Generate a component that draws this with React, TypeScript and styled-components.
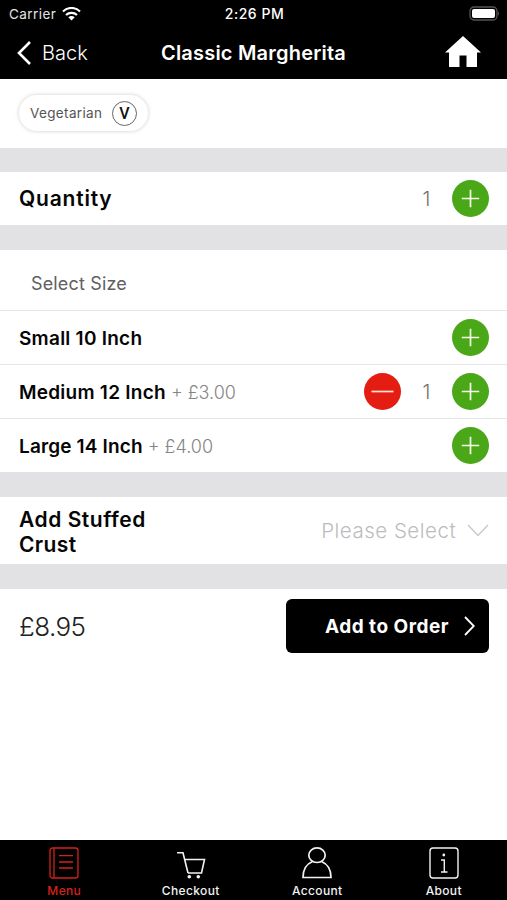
import React from "react";
import styled, { createGlobalStyle } from "styled-components";

const GlobalStyle = createGlobalStyle`
  * { box-sizing: border-box; }
  html, body { margin: 0; padding: 0; background: #fff; }
  body { font-family: Inter, "Liberation Sans", sans-serif; color: #050505; }
  button { font: inherit; border: 0; padding: 0; margin: 0; background: none; color: inherit; }
  svg { display: block; flex: none; }
`;

const Screen = styled.div`
  width: 507px;
  height: 900px;
  display: flex;
  flex-direction: column;
  overflow: hidden;
  background: #fff;
`;

const Header = styled.header`
  height: 79px;
  flex: none;
  background: #000;
  color: #fff;
`;

const StatusBar = styled.div`
  height: 27px;
  display: grid;
  grid-template-columns: 1fr auto 1fr;
  align-items: center;
  padding: 0 7px 0 9px;
`;

const Carrier = styled.div`
  display: flex;
  align-items: center;
  gap: 6px;
  color: #e4e4e4;
`;

const NavBar = styled.nav`
  height: 52px;
  display: grid;
  grid-template-columns: 1fr auto 1fr;
  align-items: center;
  padding: 0 17px;
`;

const BackButton = styled.button`
  display: flex;
  align-items: center;
  gap: 10px;
`;

const End = styled.div`
  display: flex;
  justify-content: flex-end;
`;

const HomeButton = styled.button`
  justify-self: end;
  padding: 0 9px 3px 0;
`;

const Label = styled.span<{ $size: number; $weight?: number; $track?: number; $color?: string }>`
  font-size: ${(p) => p.$size}px;
  font-weight: ${(p) => p.$weight ?? 400};
  letter-spacing: ${(p) => p.$track ?? 0}px;
  color: ${(p) => p.$color ?? "inherit"};
  white-space: nowrap;
`;

const Content = styled.main`
  flex: 1;
  min-height: 0;
`;

const TagArea = styled.section`
  height: 69px;
  padding: 16px 19px;
`;

const Tag = styled.div`
  width: 129px;
  height: 36px;
  border-radius: 18px;
  display: flex;
  align-items: center;
  justify-content: space-between;
  padding: 0 11px;
  box-shadow: 0 0 4px rgba(0, 0, 0, 0.2);
`;

const VegMark = styled.span`
  width: 25px;
  height: 25px;
  border: 1px solid #666;
  border-radius: 50%;
  display: flex;
  align-items: center;
  justify-content: center;
  font: 500 16px Roboto, sans-serif;
  color: #111;
`;

const Divider = styled.div<{ $height: number }>`
  height: ${(p) => p.$height}px;
  background: #e2e2e4;
`;

const Row = styled.div<{ $height: number; $line?: boolean }>`
  height: ${(p) => p.$height}px;
  display: flex;
  align-items: center;
  justify-content: space-between;
  padding: 0 18px 0 19px;
  border-top: ${(p) => (p.$line ? "1px solid #e6e6e8" : "0")};
`;

const GroupTitle = styled.div`
  height: 60px;
  display: flex;
  align-items: center;
  padding: 7px 31px 0;
`;

const Name = styled.div`
  display: flex;
  align-items: baseline;
  gap: 5px;
  padding-top: 2px;
`;

const Stepper = styled.div`
  display: grid;
  grid-template-columns: 37px 51px 37px;
  align-items: center;
`;

const Count = styled.span`
  grid-column: 2;
  text-align: center;
  font: 300 20px Inter, sans-serif;
  color: #707070;
`;

const RoundButton = styled.button<{ $kind: "add" | "remove" }>`
  grid-column: ${(p) => (p.$kind === "add" ? 3 : 1)};
  grid-row: 1;
  width: 37px;
  height: 37px;
  border-radius: 50%;
  background: ${(p) => (p.$kind === "add" ? "#4aa718" : "#e51c12")};
`;

const OptionName = styled.div`
  padding-top: 2px;
  line-height: 25px;
  display: flex;
  flex-direction: column;
`;

const SelectBox = styled.button`
  display: flex;
  align-items: center;
  gap: 11px;
`;

const OrderArea = styled.section`
  display: flex;
  justify-content: space-between;
  align-items: center;
  padding: 10px 18px 0 19px;
`;

const OrderButton = styled.button`
  width: 203px;
  height: 54px;
  border-radius: 6px;
  background: #000;
  color: #fff;
  display: flex;
  align-items: center;
  justify-content: flex-end;
  gap: 15px;
  padding-right: 14px;
`;

const TabBar = styled.footer`
  height: 60px;
  flex: none;
  background: #000;
  display: grid;
  grid-template-columns: repeat(4, 1fr);
  padding-left: 1px;
`;

const Tab = styled.button<{ $active?: boolean }>`
  display: flex;
  flex-direction: column;
  align-items: center;
  padding-top: 7px;
  gap: 4px;
  color: ${(p) => (p.$active ? "#d3211b" : "#f2f2f2")};
`;

const Plus = () => (
  <svg width="37" height="37" viewBox="0 0 37 37" stroke="#f4fbe9" strokeWidth="1.7">
    <path d="M9.8 18.5h17.4M18.5 9.8v17.4" />
  </svg>
);

const Minus = () => (
  <svg width="37" height="37" viewBox="0 0 37 37" stroke="#ffe3d6" strokeWidth="1.7">
    <path d="M7.500 18.500h22" />
  </svg>
);

function Quantity({ count, removable }: { count?: number; removable?: boolean }) {
  return (
    <Stepper>
      {removable && <RoundButton $kind="remove" aria-label="Remove"><Minus /></RoundButton>}
      {count !== undefined && <Count>{count}</Count>}
      <RoundButton $kind="add" aria-label="Add"><Plus /></RoundButton>
    </Stepper>
  );
}

const sizes = [
  { name: "Small 10 Inch", track: 0.25 },
  { name: "Medium 12 Inch", track: 0.25, price: "+ £3.00", count: 1 },
  { name: "Large 14 Inch", track: 0.15, price: "+ £4.00" },
];

const line = { fill: "none", stroke: "currentColor" };

const tabs = [
  {
    name: "Menu",
    icon: (
      <svg width="30" height="32" viewBox="0 0 30 32" {...line} strokeWidth="1.3">
        <rect x="1" y="1" width="28" height="30" rx="2.5" />
        <path d="M5 1v30M10 8.600h14M10 15h14M10 21h14" />
      </svg>
    ),
  },
  {
    name: "Checkout",
    icon: (
      <svg width="30" height="32" viewBox="0 0 30 32" {...line} strokeWidth="1.600">
        <path d="M1 5.700h6L12 26M8.700 12.500H28.500L25.500 26H12" />
        <circle cx="13.300" cy="29.700" r="1.800" fill="currentColor" stroke="none" />
        <circle cx="22.300" cy="29.700" r="1.800" fill="currentColor" stroke="none" />
      </svg>
    ),
  },
  {
    name: "Account",
    icon: (
      <svg width="30" height="32" viewBox="0 0 30 32" {...line} strokeWidth="1.700">
        <ellipse cx="15" cy="8.200" rx="8.200" ry="7.300" />
        <path d="M10.500 14.500C4.500 17 1 21.500 1 30.500h28c0-9-3.500-13.500-9.500-16" />
      </svg>
    ),
  },
  {
    name: "About",
    icon: (
      <svg width="30" height="32" viewBox="0 0 30 32" {...line} strokeWidth="1.400">
        <rect x="1" y="1" width="28" height="30" rx="3" />
        <path d="M12 13h3.300v12M12 25h6.500" />
        <circle cx="14.800" cy="8" r="1.400" fill="currentColor" stroke="none" />
      </svg>
    ),
  },
];

export default function App() {
  return (
    <Screen>
      <GlobalStyle />
      <Header>
        <StatusBar>
          <Carrier>
            <Label $size={13.5} $track={0.45}>Carrier</Label>
            <svg width="19" height="14" viewBox="0 0 19 14" fill="none" stroke="#fff" strokeWidth="2.200">
              <path d="M1 4.500C5.800-.2 13.200-.2 18 4.500M4 8c3.100-2.900 7.900-2.900 11 0" />
              <path d="M6.300 10.300c1.800-1.600 4.600-1.600 6.400 0l-3.200 3.200z" fill="#fff" stroke="none" />
            </svg>
          </Carrier>
          <Label $size={14} $weight={500} $track={0.5}>2:26 PM</Label>
          <End>
            <svg width="31" height="15" viewBox="0 0 31 15">
              <rect x="1" y="1" width="27" height="13" rx="4" fill="none" stroke="#555" strokeWidth="1.300" />
              <rect x="3" y="3" width="23" height="9" rx="2" fill="#fff" />
              <path d="M29 5.200q2 2.300 0 4.600z" fill="#555" />
            </svg>
          </End>
        </StatusBar>
        <NavBar>
          <BackButton>
            <svg width="15" height="24" viewBox="0 0 15 24" fill="none" stroke="#fff" strokeWidth="2.600">
              <path d="M13 1 2 12 13 23" />
            </svg>
            <Label $size={20} $weight={300}>Back</Label>
          </BackButton>
          <Label $size={20} $weight={600} $track={0.2}>Classic Margherita</Label>
          <HomeButton aria-label="Home">
            <svg width="36" height="31" viewBox="0 0 36 31" fill="#fff">
              <path d="M18 0 36 16.500h-4V31H21.500V19.500h-7V31H4V16.500H0z" />
            </svg>
          </HomeButton>
        </NavBar>
      </Header>
      <Content>
        <TagArea>
          <Tag>
            <Label $size={13.5} $color="#555" $track={0.35}>Vegetarian</Label>
            <VegMark>V</VegMark>
          </Tag>
        </TagArea>
        <Divider $height={24} />
        <Row $height={53}>
          <Label $size={21} $weight={600} $track={0.8}>Quantity</Label>
          <Quantity count={1} />
        </Row>
        <Divider $height={25} />
        <GroupTitle>
          <Label $size={18} $color="#606060" $track={0.15}>Select Size</Label>
        </GroupTitle>
        {sizes.map((s) => (
          <Row key={s.name} $height={54} $line>
            <Name>
              <Label $size={19} $weight={600} $track={s.track}>{s.name}</Label>
              {s.price && <Label $size={18} $weight={300} $color="#858585">{s.price}</Label>}
            </Name>
            <Quantity count={s.count} removable={!!s.count} />
          </Row>
        ))}
        <Divider $height={25} />
        <Row $height={67}>
          <OptionName>
            <Label $size={21} $weight={600} $track={0.55}>Add Stuffed</Label>
            <Label $size={21} $weight={600} $track={0.4}>Crust</Label>
          </OptionName>
          <SelectBox>
            <Label $size={20.5} $weight={300} $color="#bbbcbe" $track={0.5}>Please Select</Label>
            <svg width="22" height="13" viewBox="0 0 22 13" fill="none" stroke="#c9cacc" strokeWidth="1.500">
              <path d="m1 1 10 10.500L21 1" />
            </svg>
          </SelectBox>
        </Row>
        <Divider $height={25} />
        <OrderArea>
          <Label $size={26} $weight={300} $color="#222" $track={-0.6}>£8.95</Label>
          <OrderButton>
            <Label $size={19} $weight={700} $track={0.5}>Add to Order</Label>
            <svg width="11" height="20" viewBox="0 0 11 20" fill="none" stroke="#fff" strokeWidth="1.800">
              <path d="m1 1 8.800 9L1 19" />
            </svg>
          </OrderButton>
        </OrderArea>
      </Content>
      <TabBar>
        {tabs.map((t, i) => (
          <Tab key={t.name} $active={i === 0}>
            {t.icon}
            <Label $size={12} $weight={500} $track={0.35}>{t.name}</Label>
          </Tab>
        ))}
      </TabBar>
    </Screen>
  );
}
